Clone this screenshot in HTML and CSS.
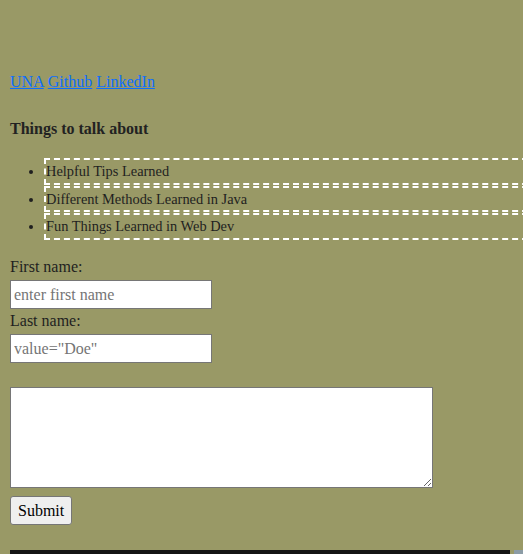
FILE: index.html
```html
<!DOCTYPE html>
<html lang="en">
<head>
<meta charset="utf-8">
<title>Page</title>
<link rel="stylesheet" href="styles.css">
</head>
<body>
<header class="top"></header>
<nav class="links">
  <a href="#">UNA</a> <a href="#">Github</a> <a href="#">LinkedIn</a>
</nav>
<h4 class="topics-title">Things to talk about</h4>
<ul class="topics">
  <li>Helpful Tips Learned</li>
  <li>Different Methods Learned in Java</li>
  <li>Fun Things Learned in Web Dev</li>
</ul>
<form class="contact">
  <label class="field-label" for="fname">First name:</label>
  <input class="field" type="text" id="fname" placeholder="enter first name">
  <label class="field-label second" for="lname">Last name:</label>
  <input class="field" type="text" id="lname" placeholder="value=&quot;Doe&quot;">
  <textarea class="message"></textarea>
  <button class="submit" type="submit">Submit</button>
</form>
<footer class="footer">
  <div class="footer-bar"></div>
  <div class="footer-side"></div>
</footer>
</body>
</html>
```
FILE: styles.css
```css
html {
  overflow: hidden;
}
body {
  margin: 0;
  padding: 0 10px;
  background: #999966;
  color: #1f1f1f;
  font-family: "Liberation Serif", "Times New Roman", serif;
  font-size: 16px;
}
.top {
  height: 73px;
}
.links a {
  color: #0d6efd;
}
.topics-title {
  margin: 29px 0 20px;
  font-size: 16px;
  color: #222;
}
.topics {
  margin: 0 0 18.5px;
  padding-left: 34px;
}
.topics li {
  width: 500px;
  border: 2px dashed #ffffff;
  padding: 3px 0 2.5px;
  margin-bottom: 1px;
  font-size: 0.9em;
}
.contact {
  display: flex;
  flex-direction: column;
  align-items: flex-start;
}
.field-label {
  display: block;
}
.field-label.second {
  margin-top: 3px;
}
.field {
  box-sizing: border-box;
  width: 202px;
  height: 29px;
  margin: 4px 0 0;
  padding: 0 3px;
  border: 1px solid #767676;
  font-family: inherit;
  font-size: 16px;
  background: #fff;
  color: #222;
}
.field::placeholder {
  color: #757575;
}
.message {
  box-sizing: border-box;
  width: 423px;
  height: 101px;
  margin: 24px 0 0;
  border: 1px solid #767676;
  background: #fff;
}
.submit {
  box-sizing: border-box;
  height: 29px;
  margin-top: 8px;
  padding: 0 7px;
  border: 1px solid #767676;
  border-radius: 3px;
  background: #efefef;
  color: #000;
  font-family: inherit;
  font-size: 16px;
}
.footer {
  display: flex;
  gap: 4px;
  margin-top: 25px;
}
.footer-bar {
  flex-shrink: 0;
  width: 500px;
  height: 40px;
  background: #141414;
}
.footer-side {
  flex-shrink: 0;
  width: 20px;
  height: 40px;
  background: #8c9ca6;
}
```
